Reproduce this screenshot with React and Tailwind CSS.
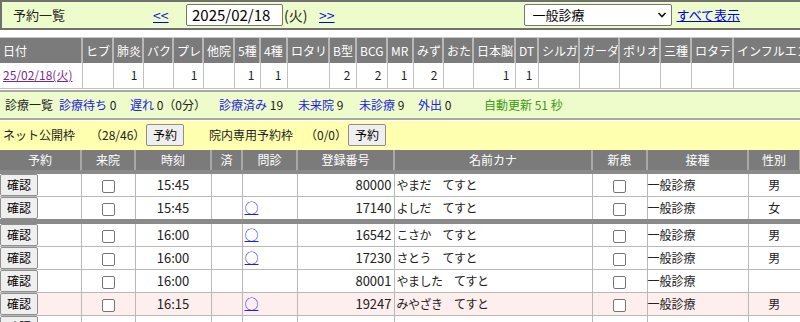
const topCols = [
  { label: "日付", w: 82 },
  { label: "ヒブ", w: 31 },
  { label: "肺炎", w: 30, v: 1 },
  { label: "バク", w: 30 },
  { label: "プレ", w: 30, v: 1 },
  { label: "他院", w: 31 },
  { label: "5種", w: 26, v: 1 },
  { label: "4種", w: 27, v: 1 },
  { label: "ロタリ", w: 42 },
  { label: "B型", w: 27, v: 2 },
  { label: "BCG", w: 31, v: 2 },
  { label: "MR", w: 26, v: 1 },
  { label: "みず", w: 30, v: 2 },
  { label: "おた", w: 30 },
  { label: "日本脳", w: 42, v: 1 },
  { label: "DT", w: 23, v: 1 },
  { label: "シルガ", w: 41 },
  { label: "ガーダ", w: 40 },
  { label: "ポリオ", w: 41 },
  { label: "三種", w: 31 },
  { label: "ロタテ", w: 42 },
  { label: "インフルエンザ", w: 100 },
];

const mainCols = [
  { label: "予約", w: 81 },
  { label: "来院", w: 54 },
  { label: "時刻", w: 76 },
  { label: "済", w: 31 },
  { label: "問診", w: 55 },
  { label: "登録番号", w: 97 },
  { label: "名前カナ", w: 198 },
  { label: "新患", w: 55 },
  { label: "接種", w: 101 },
  { label: "性別", w: 52 },
];

const rows = [
  { time: "15:45", q: false, no: "80000", name: "やまだ　てすと", sex: "男" },
  { time: "15:45", q: true, no: "17140", name: "よしだ　てすと", sex: "女", sepAfter: true },
  { time: "16:00", q: true, no: "16542", name: "こさか　てすと", sex: "男" },
  { time: "16:00", q: true, no: "17230", name: "さとう　てすと", sex: "男" },
  { time: "16:00", q: false, no: "80001", name: "やました　てすと", sex: "" },
  { time: "16:15", q: true, no: "19247", name: "みやざき　てすと", sex: "男", pink: true },
  { time: "", q: false, no: "", name: "", sex: "" },
];

function Btn({ children }) {
  return (
    <button className="h-[22px] w-[38px] px-0 text-[12px] leading-none bg-[#efefef] border border-[#8f8f8f] rounded-[2px] text-black">
      {children}
    </button>
  );
}

function Check() {
  return (
    <span className="inline-block w-[13px] h-[13px] border border-[#767676] rounded-[2px] bg-white align-middle" />
  );
}

function Stat({ label, value, w }) {
  return (
    <span className="whitespace-nowrap shrink-0" style={{ width: w }}>
      <span className="text-[#2222dd]">{label}</span> {value}
    </span>
  );
}

export default function App() {
  return (
    <div
      className="w-[800px] h-[322px] overflow-hidden bg-white text-[12px] text-[#222]"
      style={{ fontFamily: '"Noto Sans CJK JP", "Noto Sans", sans-serif' }}
    >
      {/* --- top bar --- */}
      <div className="h-[30px] flex items-center bg-[#eefccc] border-2 border-[#707070] border-r-0">
        <span className="ml-[11px] w-[140px] text-[13px]">予約一覧</span>
        <a className="text-[#0000ee] underline text-[14px] w-[33px]">&lt;&lt;</a>
        <span className="h-[22px] w-[97px] bg-white border border-[#767676] rounded-[2px] flex items-center pl-[5px] text-[15px] text-black">
          2025/02/18
        </span>
        <span className="ml-[1px] w-[35px] text-[14px]">(火)</span>
        <a className="text-[#0000ee] underline text-[14px]">&gt;&gt;</a>
        <div className="ml-[189px] h-[22px] w-[148px] bg-white border border-[#767676] rounded-[2px] flex items-center justify-between pl-[8px] pr-[4px] text-[13px] text-black">
          <span>一般診療</span>
          <svg width="10" height="10" viewBox="0 0 10 10">
            <path d="M1.5 3 L5 6.5 L8.5 3" fill="none" stroke="#111" strokeWidth="1.6" />
          </svg>
        </div>
        <a className="ml-[5px] text-[#0000ee] underline text-[13px]">すべて表示</a>
      </div>

      {/* --- vaccine count table --- */}
      <div className="mt-[7px] border-t border-[#c8c8c8]">
        <table className="table-fixed border-collapse w-[833px]">
          <thead>
            <tr className="h-[25px] bg-[#7b7b7b] text-white">
              {topCols.map((c) => (
                <th
                  key={c.label}
                  style={{ width: c.w }}
                  className="font-normal text-left pl-[3px] whitespace-nowrap overflow-hidden border-r-2 border-[#b8b8b8]"
                >
                  {c.label}
                </th>
              ))}
            </tr>
          </thead>
          <tbody>
            <tr className="h-[25px]">
              {topCols.map((c, i) => (
                <td
                  key={c.label}
                  className="border-r border-b border-[#c0c0c0] text-right pr-[5px] whitespace-nowrap"
                >
                  {i === 0 ? (
                    <a className="block text-left pl-[3px] text-[#7a2a8a] underline">25/02/18(火)</a>
                  ) : (
                    c.v || ""
                  )}
                </td>
              ))}
            </tr>
          </tbody>
        </table>
      </div>

      {/* --- status bar --- */}
      <div className="mt-[1px] h-[30px] flex items-center pl-[5px] bg-[#eefccc] border-y-2 border-[#a8a8a8]">
        <span className="w-[54px] shrink-0">診療一覧</span>
        <Stat label="診療待ち" value="0" w={71} />
        <span className="whitespace-nowrap w-[89px] shrink-0">
          <span className="text-[#2222dd]">遅れ</span> 0（0分）
        </span>
        <Stat label="診療済み" value="19" w={79} />
        <Stat label="未来院" value="9" w={61} />
        <Stat label="未診療" value="9" w={59} />
        <Stat label="外出" value="0" w={66} />
        <span className="text-[#3a9a10] whitespace-nowrap">自動更新 51 秒</span>
      </div>

      {/* --- reserve frame bar --- */}
      <div className="mt-[1px] h-[29px] flex items-center bg-[#ffffb0] pl-[3px]">
        <span className="w-[87px] shrink-0">ネット公開枠</span>
        <span className="w-[56px] shrink-0">（28/46）</span>
        <Btn>予約</Btn>
        <span className="ml-[25px] w-[96px] shrink-0">院内専用予約枠</span>
        <span className="w-[43px] shrink-0">（0/0）</span>
        <Btn>予約</Btn>
      </div>

      {/* --- reservation table --- */}
      <table className="table-fixed border-collapse w-[800px]">
        <thead>
          <tr className="h-[22px] bg-[#7b7b7b] text-white border-b-4 border-[#8a8a8a]">
            {mainCols.map((c) => (
              <th
                key={c.label}
                style={{ width: c.w }}
                className="font-normal text-center border-r-2 border-[#a8a8a8] whitespace-nowrap"
              >
                {c.label}
              </th>
            ))}
          </tr>
        </thead>
        <tbody>
          {rows.map((r, i) => (
            <tr
              key={i}
              className={`h-[23px] ${r.pink ? "bg-[#ffeeee]" : "bg-white"} ${
                r.sepAfter ? "border-b-[5px] border-[#8a8a8a]" : "border-b border-[#b8b8b8]"
              }`}
            >
              <td className="border-r border-[#b8b8b8] p-0">
                <Btn>確認</Btn>
              </td>
              <td className="border-r border-[#b8b8b8] text-center">
                {r.time && <Check />}
              </td>
              <td className="border-r border-[#b8b8b8] text-center text-[13px]">{r.time}</td>
              <td className="border-r border-[#b8b8b8]" />
              <td className="border-r border-[#b8b8b8] pl-[2px]">
                {r.q && <a className="text-[#2222dd] underline text-[14px] leading-none">○</a>}
              </td>
              <td className="border-r border-[#b8b8b8] text-right pr-[2px] text-[13px]">{r.no}</td>
              <td className="border-r border-[#b8b8b8] pl-[2px] whitespace-nowrap tracking-[-0.5px]">{r.name}</td>
              <td className="border-r border-[#b8b8b8] text-center">
                {r.time && <Check />}
              </td>
              <td className="border-r border-[#b8b8b8] pl-0">{r.time && "一般診療"}</td>
              <td className="text-center">{r.sex}</td>
            </tr>
          ))}
        </tbody>
      </table>
    </div>
  );
}
